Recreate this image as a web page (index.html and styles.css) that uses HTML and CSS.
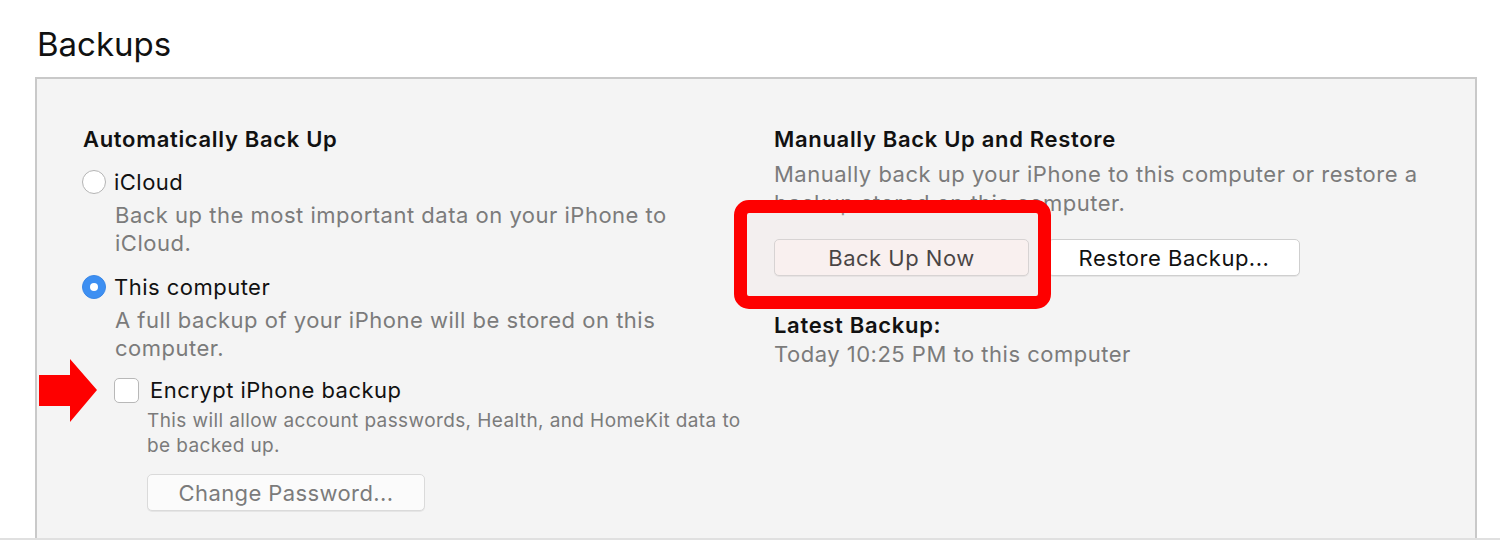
FILE: index.html
```html
<!DOCTYPE html>
<html>
<head>
<meta charset="utf-8">
<link rel="stylesheet" href="styles.css">
</head>
<body>
<h1 class="page-title">Backups</h1>
<div class="panel">
  <div class="col col-left">
    <div class="sec-title">Automatically Back Up</div>
    <div class="radio-row row-icloud"><span class="radio"></span><span class="label">iCloud</span></div>
    <div class="desc">Back up the most important data on your iPhone to<br>iCloud.</div>
    <div class="radio-row row-computer"><span class="radio checked"></span><span class="label">This computer</span></div>
    <div class="desc">A full backup of your iPhone will be stored on this<br>computer.</div>
    <div class="check-row"><span class="checkbox"></span><span class="label">Encrypt iPhone backup</span></div>
    <div class="small-desc">This will allow account passwords, Health, and HomeKit data to<br>be backed up.</div>
    <div class="btn btn-disabled btn-change">Change Password...</div>
  </div>
  <div class="col col-right">
    <div class="sec-title">Manually Back Up and Restore</div>
    <div class="desc desc-manual">Manually back up your iPhone to this computer or restore a<br>backup stored on this computer.</div>
    <div class="btn-row">
      <div class="btn btn-now">Back Up Now</div>
      <div class="btn btn-restore">Restore Backup...</div>
    </div>
    <div class="sec-title latest">Latest Backup:</div>
    <div class="desc latest-val">Today 10:25 PM to this computer</div>
  </div>
  <div class="highlight"></div>
  <svg class="arrow" width="60" height="64" viewBox="0 0 60 64"><polygon points="0,16 31,16 31,0 58,31 31,63 31,47 0,47" fill="#fe0000"/></svg>
</div>
<div class="bottom-line"></div>
</body>
</html>
```

FILE: styles.css
```css
html, body {
  margin: 0;
  padding: 0;
  background: #ffffff;
}
body {
  font-family: Inter, "Liberation Sans", Arial, sans-serif;
  color: #111;
  width: 1500px;
  height: 559px;
  overflow: hidden;
}
.page-title {
  margin: 0;
  padding: 24px 0 0 37px;
  height: 53px;
  box-sizing: border-box;
  font-size: 33px;
  font-weight: normal;
  line-height: 40px;
  letter-spacing: 0;
  color: #111;
}
.panel {
  position: relative;
  margin-left: 35px;
  width: 1442px;
  height: 461px;
  box-sizing: border-box;
  margin-top: 24px;
  background: #f4f4f4;
  border: 2px solid #c9c9c9;
  border-bottom: none;
  display: flex;
}
.col {
  display: flex;
  flex-direction: column;
  align-items: flex-start;
}
.col-left {
  padding: 46px 0 0 46px;
  width: 692px;
  box-sizing: border-box;
}
.col-right {
  padding: 46px 0 0 45px;
}
.sec-title {
  font-size: 22px;
  font-weight: 600;
  line-height: 28px;
  letter-spacing: 0.68px;
  color: #111;
  height: 28px;
  white-space: nowrap;
}
.radio-row, .check-row {
  display: flex;
  align-items: center;
  height: 32px;
}
.row-icloud { margin-top: 13px; }
.row-computer { margin-top: 14px; }
.radio {
  width: 24px;
  height: 24px;
  box-sizing: border-box;
  border-radius: 50%;
  border: 1px solid #b4b4b4;
  background: #fff;
  margin-right: 8px;
  margin-left: -1px;
  position: relative;
  flex: none;
}
.radio.checked {
  background: #3d8ff2;
  border-color: #3a87e6;
}
.radio.checked::after {
  content: "";
  position: absolute;
  left: 7px;
  top: 7px;
  width: 8px;
  height: 8px;
  border-radius: 50%;
  background: #fff;
}
.label {
  font-size: 22px;
  line-height: 32px;
  letter-spacing: 0.48px;
  color: #111;
}
.desc {
  font-size: 22px;
  line-height: 28px;
  letter-spacing: 0.5px;
  color: #7b7b7b;
  margin-top: 3px;
  margin-left: 32px;
  white-space: nowrap;
}
.check-row {
  margin-top: 12px;
  margin-left: 31px;
}
.checkbox {
  width: 25px;
  height: 25px;
  box-sizing: border-box;
  border: 1px solid #b8b8b8;
  border-radius: 5px;
  background: #fff;
  margin-right: 11px;
  flex: none;
}
.small-desc {
  font-size: 19px;
  line-height: 25px;
  letter-spacing: 0.4px;
  color: #7b7b7b;
  margin-top: 2px;
  margin-left: 64px;
  white-space: nowrap;
}
.btn {
  height: 37px;
  box-sizing: border-box;
  border: 1px solid #cfcfcf;
  border-radius: 5px;
  background: #fff;
  font-size: 22px;
  line-height: 37px;
  letter-spacing: 0.5px;
  text-align: center;
  color: #111;
  box-shadow: 0 1px 0 rgba(0,0,0,0.06);
}
.btn-change {
  margin-top: 16px;
  margin-left: 64px;
  width: 278px;
  color: #7b7b7b;
  background: #fbfbfb;
  border-color: #dadada;
  letter-spacing: 0.4px;
}
.desc-manual {
  margin-left: 0;
  line-height: 29px;
  margin-top: 7px;
}
.btn-row {
  display: flex;
  gap: 19px;
  margin-top: 21px;
}
.btn-now {
  width: 255px;
  background: #fdf6f4;
}
.btn-restore {
  width: 252px;
}
.latest {
  margin-top: 35px;
}
.latest-val {
  margin-left: 0;
  margin-top: 1px;
}
.highlight {
  position: absolute;
  left: 697px;
  top: 121px;
  width: 317px;
  height: 109px;
  box-sizing: border-box;
  border: 13px solid #fe0000;
  border-radius: 15px;
  background: rgba(240, 225, 222, 0.25);
}
.arrow {
  position: absolute;
  left: 2px;
  top: 280px;
}
.bottom-line {
  height: 2px;
  background: #e0e0e0;
  width: 1500px;
}
```
